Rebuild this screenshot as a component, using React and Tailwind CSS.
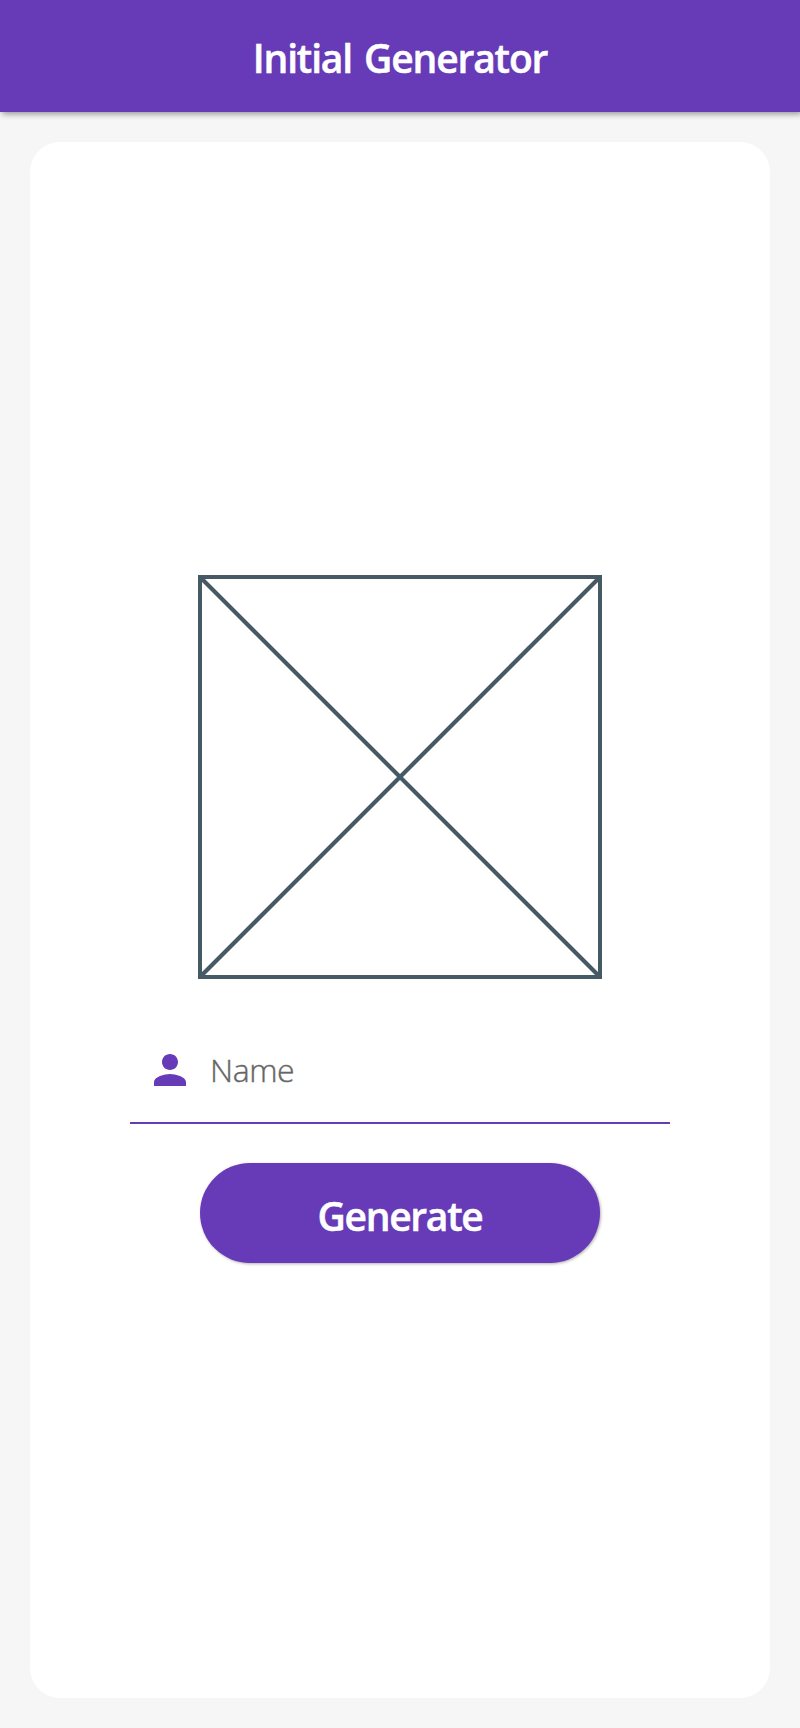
function PersonIcon() {
  return (
    <svg viewBox="0 0 24 24" className="size-12 shrink-0 fill-[#673ab7]">
      <path d="M12 12c2.21 0 4-1.79 4-4s-1.79-4-4-4-4 1.79-4 4 1.79 4 4 4zm0 2c-2.67 0-8 1.34-8 4v2h16v-2c0-2.66-5.33-4-8-4z" />
    </svg>
  );
}

function Placeholder() {
  return (
    <svg viewBox="0 0 404 404" className="size-[404px] fill-none stroke-[#455a64] stroke-4">
      <rect x="2" y="2" width="400" height="400" />
      <path d="M2 2L402 402M402 2L2 402" className="stroke-[4.2]" />
    </svg>
  );
}

export default function App() {
  return (
    <div className="flex h-[1728px] w-[800px] flex-col bg-[#f6f6f6] font-['Open_Sans','Noto_Sans',sans-serif]">
      <header className="flex h-28 shrink-0 items-center justify-center bg-[#673ab7] pt-1 shadow-[2px_2px_6px_rgba(0,0,0,0.4)]">
        <h1 className="text-[39px] leading-[56px] font-semibold tracking-[-1.15px] [word-spacing:3px] whitespace-nowrap text-white [-webkit-text-stroke:0.5px_white]">Initial Generator</h1>
      </header>
      <main className="m-[30px] flex flex-1 flex-col items-center rounded-[30px] bg-white pt-[433px]">
        <Placeholder />
        <label className="mt-10 flex h-[105px] w-[540px] items-center border-b-2 border-[#673ab7] pb-[2px] pl-4">
          <PersonIcon />
          <span className="ml-4 text-[32px] leading-[44px] font-light tracking-[-0.4px] text-[#666666] [-webkit-text-stroke:0.4px_#666666]">Name</span>
        </label>
        <button className="mt-[39px] flex h-[100px] w-[400px] items-center justify-center rounded-[50px] bg-[#673ab7] pt-[5px] text-[39px] leading-[56px] font-semibold tracking-[-1.3px] text-white shadow-[1px_1px_3px_rgba(0,0,0,0.3)] [-webkit-text-stroke:0.5px_white]">
          Generate
        </button>
      </main>
    </div>
  );
}
